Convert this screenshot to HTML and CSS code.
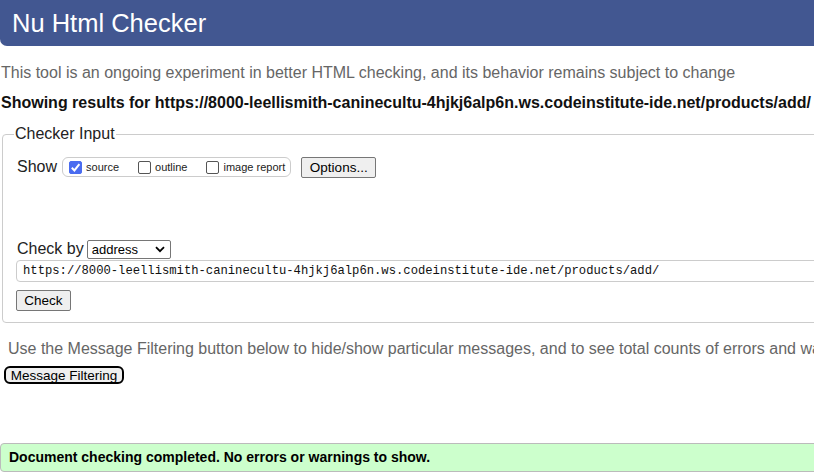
FILE: index.html
```html
<!DOCTYPE html>
<html lang="en">
<head>
<meta charset="utf-8">
<title>Nu Html Checker</title>
<link rel="stylesheet" href="styles.css">
</head>
<body>
<div class="page">
  <h1 class="title">Nu Html Checker</h1>
  <p class="intro">This tool is an ongoing experiment in better HTML checking, and its behavior remains subject to change</p>
  <p class="results">Showing results for https://8000-leellismith-caninecultu-4hjkj6alp6n.ws.codeinstitute-ide.net/products/add/</p>
  <fieldset class="input-set">
    <legend class="legend">Checker Input</legend>
    <div class="show-row">
      <span class="label">Show</span>
      <span class="show-box">
        <label class="opt"><span class="cb checked"><svg viewBox="0 0 13 13" width="13" height="13"><path d="M2.8 6.8 L5.4 9.4 L10.4 3.2" fill="none" stroke="#fff" stroke-width="2"/></svg></span>source</label>
        <label class="opt"><span class="cb"></span>outline</label>
        <label class="opt"><span class="cb"></span>image report</label>
      </span>
      <span class="btn options">Options...</span>
    </div>
    <div class="check-row">
      <span class="label">Check by</span>
      <span class="select">address<svg class="chev" viewBox="0 0 10 7" width="10" height="7"><path d="M1 1.2 L5 5.2 L9 1.2" fill="none" stroke="#000" stroke-width="1.8"/></svg></span>
    </div>
    <div class="url-input">https://8000-leellismith-caninecultu-4hjkj6alp6n.ws.codeinstitute-ide.net/products/add/</div>
    <span class="btn check">Check</span>
  </fieldset>
  <p class="filter-note">Use the Message Filtering button below to hide/show particular messages, and to see total counts of errors and warnings.</p>
  <span class="btn filter">Message Filtering</span>
  <div class="success">Document checking completed. No errors or warnings to show.</div>
</div>
</body>
</html>
```
FILE: styles.css
```css
html, body {
  margin: 0;
  padding: 0;
  overflow: hidden;
  background: #fff;
}
body {
  font-family: "Liberation Sans", Arial, sans-serif;
  color: #222;
  width: 814px;
  height: 475px;
}
.page {
  width: 1000px;
  display: flex;
  flex-direction: column;
  align-items: flex-start;
}
.title {
  margin: 0;
  width: 1000px;
  box-sizing: border-box;
  height: 46px;
  background: #425791;
  color: #fff;
  font-weight: normal;
  font-size: 25.5px;
  line-height: 46px;
  padding-left: 12px;
  border-radius: 0 0 0 7px;
}
.intro {
  margin: 18px 0 0 1px;
  font-size: 16px;
  line-height: 18px;
  color: #666;
  white-space: nowrap;
}
.results {
  margin: 12px 0 0 1px;
  font-size: 16px;
  line-height: 18px;
  font-weight: bold;
  color: #111;
  white-space: nowrap;
}
.input-set {
  margin: 13px 0 0 2px;
  width: 990px;
  box-sizing: border-box;
  border: 1px solid #ccc;
  border-radius: 4px;
  padding: 6px 14px 10px 14px;
  height: 198px;
}
.legend {
  font-size: 16px;
  padding: 0 1px;
  margin-left: -3px;
  color: #222;
}
.show-row {
  display: flex;
  align-items: center;
  height: 22px;
  margin-top: 7px;
}
.label {
  font-size: 16px;
  color: #222;
}
.show-box {
  display: flex;
  align-items: center;
  margin-left: 5px;
  height: 18px;
  border: 1px solid #ccc;
  border-radius: 6px;
  padding: 0 5px 0 6px;
}
.opt {
  display: flex;
  align-items: center;
  font-size: 11px;
  color: #222;
}
.opt + .opt { margin-left: 19px; }
.cb {
  width: 11px;
  height: 11px;
  border: 1px solid #555;
  border-radius: 2px;
  margin-right: 4px;
  box-sizing: content-box;
  display: inline-flex;
}
.cb.checked {
  background: #4a6cf0;
  border-color: #4a6cf0;
}
.cb svg { margin: -1px; }
.btn {
  display: inline-flex;
  align-items: center;
  justify-content: center;
  box-sizing: border-box;
  border: 1px solid #767676;
  border-radius: 2px;
  background: #efefef;
  color: #000;
  font-size: 13.5px;
}
.options {
  margin-left: 10px;
  width: 75px;
  height: 21px;
}
.check-row {
  display: flex;
  align-items: center;
  margin-top: 61px;
  height: 20px;
}
.select {
  margin-left: 3px;
  width: 84px;
  height: 19px;
  box-sizing: border-box;
  border: 1px solid #767676;
  border-radius: 2px;
  font-size: 13px;
  color: #000;
  display: flex;
  align-items: center;
  justify-content: space-between;
  padding: 0 5px 0 4px;
}
.url-input {
  margin-top: 1px;
  margin-left: -1px;
  width: 960px;
  height: 22px;
  box-sizing: border-box;
  border: 1px solid #ccc;
  border-radius: 4px;
  font-family: "Liberation Mono", "DejaVu Sans Mono", monospace;
  font-size: 12.2px;
  line-height: 21px;
  padding-left: 6px;
  color: #111;
  white-space: nowrap;
}
.check {
  margin-top: 8px;
  margin-left: -1px;
  width: 55px;
  height: 21px;
}
.filter-note {
  margin: 17px 0 0 8px;
  font-size: 16px;
  line-height: 18px;
  color: #666;
  white-space: nowrap;
}
.filter {
  margin: 8px 0 0 4px;
  width: 120px;
  height: 18px;
  border: 2px solid #000;
  border-radius: 6px;
  background: #efefef;
  font-size: 13.5px;
}
.success {
  margin-top: 59px;
  width: 990px;
  box-sizing: border-box;
  height: 29px;
  background: #ccffcc;
  border: 1px solid #bbb;
  border-radius: 4px;
  font-size: 14px;
  font-weight: bold;
  color: #000;
  line-height: 27px;
  padding-left: 8px;
}
```
